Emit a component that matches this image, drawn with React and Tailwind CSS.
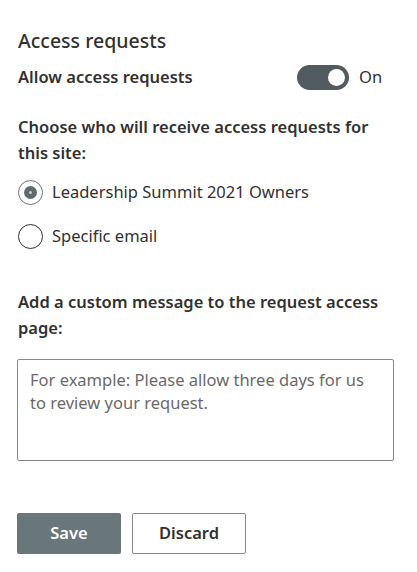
import React, { useState } from "react";

// Access requests settings panel

function Toggle({ on, onChange }) {
  return (
    <button
      type="button"
      onClick={() => onChange(!on)}
      className={`flex h-[25px] w-[52px] items-center rounded-full px-[4px] ${
        on ? "justify-end bg-[#525c60]" : "justify-start border border-[#525c60] bg-white"
      }`}
    >
      <span className={`h-[17px] w-[17px] rounded-full ${on ? "bg-white" : "bg-[#525c60]"}`} />
    </button>
  );
}

function Radio({ checked, label, onSelect }) {
  return (
    <label className="flex cursor-pointer items-center gap-[9px]" onClick={onSelect}>
      <span
        className={`flex h-[25px] w-[25px] items-center justify-center rounded-full border ${
          checked ? "border-[#6b7579]" : "border-[#323130]"
        }`}
      >
        {checked && (
          <span className="flex h-[13px] w-[13px] items-center justify-center rounded-full bg-[#5f6b6f]">
            <span className="h-[3px] w-[3px] rounded-full bg-[#c8cdcf]" />
          </span>
        )}
      </span>
      <span className="text-[16.5px] text-[#323130]">{label}</span>
    </label>
  );
}

export default function App() {
  const [allow, setAllow] = useState(true);
  const [who, setWho] = useState("owners");

  return (
    <div
      className="min-h-[572px] w-[417px] bg-white pl-[17px] pr-[24px] pt-[28px] text-[#323130]"
      style={{ fontFamily: '"Noto Sans", "Open Sans", sans-serif' }}
    >
      <h2 className="pl-[1px] text-[19.5px] leading-[26px] font-medium">Access requests</h2>

      <div className="mt-[11px] flex items-center justify-between pl-[1px] pr-[10px]">
        <span className="text-[16.5px] font-semibold">Allow access requests</span>
        <div className="flex items-center gap-[10px]">
          <Toggle on={allow} onChange={setAllow} />
          <span className="w-[24px] text-[16.5px]">{allow ? "On" : "Off"}</span>
        </div>
      </div>

      <p className="mt-[24px] pl-[1px] text-[16.5px] leading-[26px] font-semibold">
        Choose who will receive access requests for this site:
      </p>

      <div className="mt-[14px] flex flex-col gap-[19px] pl-[1px]">
        <Radio
          checked={who === "owners"}
          label="Leadership Summit 2021 Owners"
          onSelect={() => setWho("owners")}
        />
        <Radio
          checked={who === "email"}
          label="Specific email"
          onSelect={() => setWho("email")}
        />
      </div>

      <p className="mt-[40px] pl-[1px] text-[16.5px] leading-[26px] font-semibold">
        Add a custom message to the request access page:
      </p>

      <textarea
        className="mt-[18px] block h-[102px] w-[377px] resize-none rounded-[2px] border border-[#8a8886] px-[12px] py-[8px] text-[16.5px] leading-[23px] placeholder:text-[#6b6967] focus:outline-none"
        placeholder="For example: Please allow three days for us to review your request."
      />

      <div className="mt-[52px] flex gap-[11px]">
        <button className="h-[41px] w-[104px] rounded-[2px] bg-[#69777b] text-[16.5px] font-semibold text-white">
          Save
        </button>
        <button className="h-[41px] w-[114px] rounded-[2px] border border-[#8a8886] bg-white text-[16.5px] font-semibold text-[#323130]">
          Discard
        </button>
      </div>
    </div>
  );
}
